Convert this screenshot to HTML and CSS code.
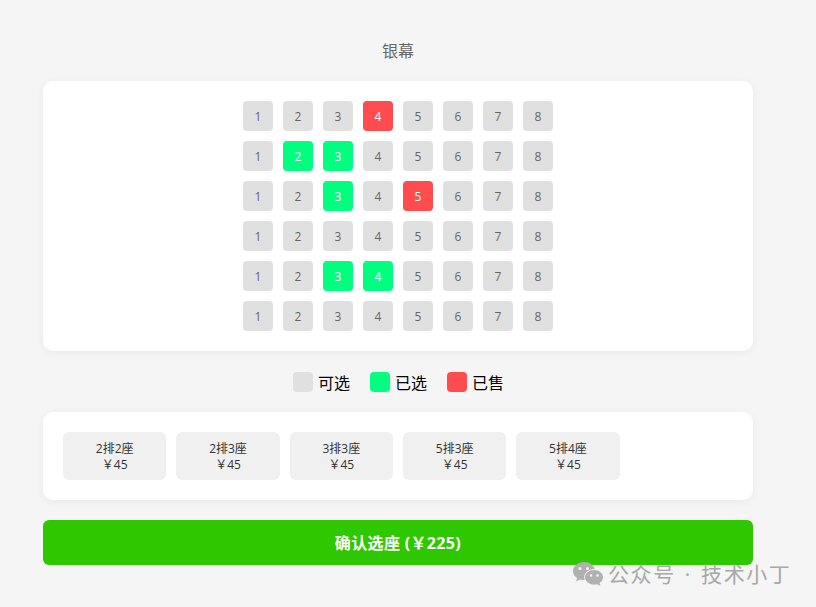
FILE: index.html
```html
<!DOCTYPE html>
<html lang="zh-CN">
<head>
    <meta charset="UTF-8">
    <title>选座</title>
    <link rel="stylesheet" href="styles.css">
</head>
<body>

<div class="page">
    <div class="screen">银幕</div>

    <div class="card hall">
        <div class="row">
            <div class="seat">1</div><div class="seat">2</div><div class="seat">3</div><div class="seat sold">4</div>
            <div class="seat">5</div><div class="seat">6</div><div class="seat">7</div><div class="seat">8</div>
        </div>
        <div class="row">
            <div class="seat">1</div><div class="seat picked">2</div><div class="seat picked">3</div><div class="seat">4</div>
            <div class="seat">5</div><div class="seat">6</div><div class="seat">7</div><div class="seat">8</div>
        </div>
        <div class="row">
            <div class="seat">1</div><div class="seat">2</div><div class="seat picked">3</div><div class="seat">4</div>
            <div class="seat sold">5</div><div class="seat">6</div><div class="seat">7</div><div class="seat">8</div>
        </div>
        <div class="row">
            <div class="seat">1</div><div class="seat">2</div><div class="seat">3</div><div class="seat">4</div>
            <div class="seat">5</div><div class="seat">6</div><div class="seat">7</div><div class="seat">8</div>
        </div>
        <div class="row">
            <div class="seat">1</div><div class="seat">2</div><div class="seat picked">3</div><div class="seat picked">4</div>
            <div class="seat">5</div><div class="seat">6</div><div class="seat">7</div><div class="seat">8</div>
        </div>
        <div class="row">
            <div class="seat">1</div><div class="seat">2</div><div class="seat">3</div><div class="seat">4</div>
            <div class="seat">5</div><div class="seat">6</div><div class="seat">7</div><div class="seat">8</div>
        </div>
    </div>

    <div class="legend">
        <div class="legend-item"><span class="swatch"></span>可选</div>
        <div class="legend-item"><span class="swatch picked"></span>已选</div>
        <div class="legend-item"><span class="swatch sold"></span>已售</div>
    </div>

    <div class="card tickets">
        <div class="ticket"><div>2排2座</div><div>￥45</div></div>
        <div class="ticket"><div>2排3座</div><div>￥45</div></div>
        <div class="ticket"><div>3排3座</div><div>￥45</div></div>
        <div class="ticket"><div>5排3座</div><div>￥45</div></div>
        <div class="ticket"><div>5排4座</div><div>￥45</div></div>
    </div>

    <button class="confirm">确认选座 (￥225)</button>
</div>

<div class="mark">
    <svg class="mark-icon" width="32" height="26" viewBox="0 0 32 26">
        <path fill="#b0b0b0" d="M12 1C5.900 1 1 5 1 10c0 2.900 1.600 5.400 4.200 7.100L4 20.600l4.200-2.100c1.200.4 2.500.6 3.800.6h.7c-.3-.9-.5-1.800-.5-2.800 0-4.700 4.500-8.400 10-8.400h.6C21.500 3.800 17.200 1 12 1z"/>
        <path fill="#b0b0b0" d="M22.200 9C17.100 9 13 12.300 13 16.300s4.100 7.300 9.200 7.300c1 0 2-.1 2.900-.4l3.400 1.800-.9-3c2.300-1.400 3.400-3.500 3.400-5.700C31 12.300 27.300 9 22.200 9z"/>
        <circle cx="8" cy="7.500" r="1.500" fill="#f5f5f5"/>
        <circle cx="15.500" cy="7.500" r="1.500" fill="#f5f5f5"/>
        <circle cx="19" cy="14.500" r="1.300" fill="#f5f5f5"/>
        <circle cx="25.500" cy="14.500" r="1.300" fill="#f5f5f5"/>
    </svg>
    <span class="mark-text">公众号 · 技术小丁</span>
</div>

</body>
</html>
```

FILE: styles.css
```css
* {
    margin: 0;
    padding: 0;
    box-sizing: border-box;
}

body {
    background-color: #f5f5f5;
    font-family: "Open Sans", "Noto Sans CJK SC", sans-serif;
    height: 607px;
    overflow: hidden;
    position: relative;
}

.page {
    width: 710px;
    margin-left: 43px;
    padding-top: 40px;
}

.screen {
    height: 41px;
    font-size: 16px;
    line-height: 22px;
    color: #666;
    text-align: center;
}

.card {
    background-color: #fff;
    border-radius: 10px;
    box-shadow: 0 2px 10px rgba(0, 0, 0, 0.05);
    padding: 20px;
}

.row {
    display: flex;
    justify-content: center;
    gap: 10px;
    margin-bottom: 10px;
}

.row:last-child {
    margin-bottom: 0;
}

.seat {
    width: 30px;
    height: 30px;
    border-radius: 4px;
    background-color: #e0e0e0;
    color: #666;
    font-size: 12px;
    display: flex;
    align-items: center;
    justify-content: center;
}

.seat.picked {
    background-color: #00ff7f;
    color: #fff;
}

.seat.sold {
    background-color: #ff4d4f;
    color: #fff;
}

.legend {
    display: flex;
    justify-content: center;
    gap: 20px;
    margin: 21px 0 20px;
    padding-left: 1px;
    height: 20px;
}

.legend-item {
    display: flex;
    align-items: center;
    gap: 5px;
    font-size: 16px;
    color: #000;
}

.swatch {
    width: 20px;
    height: 20px;
    border-radius: 4px;
    background-color: #e0e0e0;
}

.swatch.picked {
    background-color: #00ff7f;
}

.swatch.sold {
    background-color: #ff4d4f;
}

.tickets {
    display: flex;
    flex-wrap: wrap;
    gap: 10px;
}

.ticket {
    width: calc((100% - 50px) / 6);
    height: 48px;
    padding-top: 9px;
    border-radius: 6px;
    background-color: #f0f0f0;
    color: #333;
    font-size: 12px;
    line-height: 16px;
    text-align: center;
}

.confirm {
    display: block;
    width: 100%;
    height: 45px;
    margin-top: 20px;
    padding-bottom: 2px;
    border: none;
    border-radius: 6px;
    background-color: #2fc700;
    color: #fff;
    font-family: inherit;
    font-size: 16px;
    font-weight: bold;
    letter-spacing: 0.35px;
}

.mark {
    position: absolute;
    left: 572px;
    top: 560px;
    display: flex;
    align-items: center;
    gap: 4px;
    color: #a8a8a8;
    font-size: 21px;
    line-height: 28px;
}

.mark-text {
    letter-spacing: 1.6px;
    word-spacing: 2px;
}
```
